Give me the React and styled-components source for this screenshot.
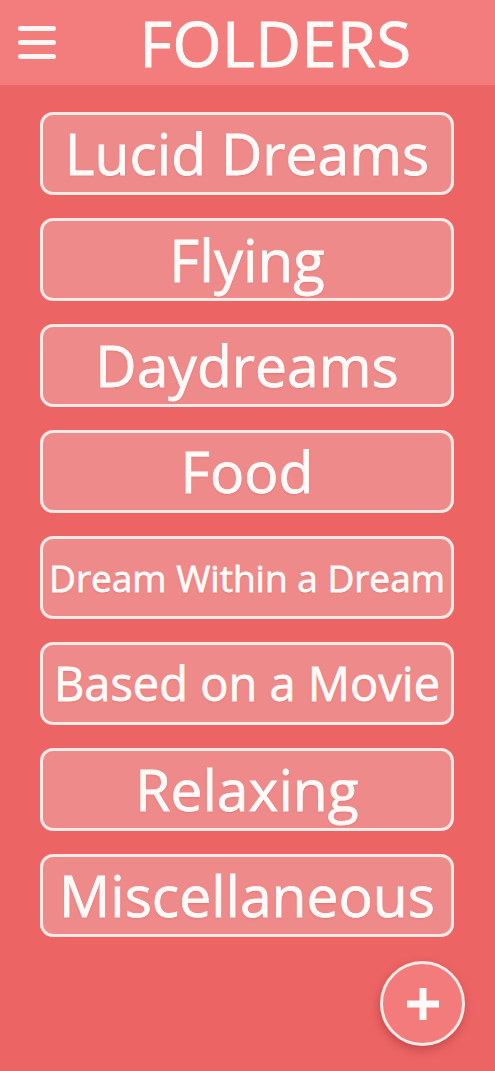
import React from 'react';
import styled, { createGlobalStyle } from 'styled-components';

const GlobalStyle = createGlobalStyle`
  html, body {
    margin: 0;
    padding: 0;
    background: #ec6464;
  }
  * { box-sizing: border-box; }
`;

const Page = styled.div`
  position: relative;
  min-height: 100vh;
  background: #ec6464;
  font-family: "Open Sans", "Noto Sans", sans-serif;
  color: #fffaf8;
`;

const Header = styled.header`
  display: flex;
  align-items: center;
  height: 85px;
  padding-left: 18px;
  background: #f37c7c;
`;

const Burger = styled.button`
  display: flex;
  flex-direction: column;
  gap: 9px;
  width: 38px;
  padding: 0;
  border: 0;
  background: none;

  span {
    display: block;
    height: 5px;
    border-radius: 3px;
    background: #fff6f3;
  }
`;

const Title = styled.h1`
  flex: 1;
  margin: 0;
  text-align: center;
  font-size: 63px;
  font-weight: 400;
  line-height: 1;
  letter-spacing: 0.5px;
  -webkit-text-stroke: 1px #fffaf8;
`;

const List = styled.div`
  display: flex;
  flex-direction: column;
  gap: 23px;
  padding: 27px 41px 0 40px;
`;

const Folder = styled.button`
  display: flex;
  align-items: center;
  justify-content: center;
  height: 83px;
  padding: 0 4px;
  border: 3px solid #fde9e6;
  border-radius: 13px;
  background: #ef8a8a;
  color: #fffaf8;
  font-family: inherit;
  font-size: ${p => p.$size}px;
  font-weight: 400;
  white-space: nowrap;
  line-height: 1;
  -webkit-text-stroke: 0.8px #fffaf8;
  text-shadow: 0 1px 2px rgba(150, 50, 50, 0.25);
`;

const Fab = styled.button`
  position: absolute;
  right: 30px;
  bottom: 25px;
  display: flex;
  align-items: center;
  justify-content: center;
  width: 85px;
  height: 85px;
  padding: 0;
  border: 3px solid #fde9e6;
  border-radius: 50%;
  background: #f37b7b;
  box-shadow: -1px 4px 8px rgba(120, 30, 30, 0.35);
`;

const folders = [
  { name: 'Lucid Dreams', size: 57 },
  { name: 'Flying', size: 58 },
  { name: 'Daydreams', size: 57 },
  { name: 'Food', size: 57 },
  { name: 'Dream Within a Dream', size: 37 },
  { name: 'Based on a Movie', size: 47 },
  { name: 'Relaxing', size: 57 },
  { name: 'Miscellaneous', size: 57 },
];

export default function App() {
  return (
    <Page>
      <GlobalStyle />
      <Header>
        <Burger aria-label="menu">
          <span />
          <span />
          <span />
        </Burger>
        <Title>FOLDERS</Title>
      </Header>
      <List>
        {folders.map(f => (
          <Folder key={f.name} $size={f.size}>{f.name}</Folder>
        ))}
      </List>
      <Fab aria-label="add folder">
        <svg width="40" height="40" viewBox="0 0 40 40">
          <path d="M20 4v32M4 20h32" stroke="#fffaf8" strokeWidth="7" />
        </svg>
      </Fab>
    </Page>
  );
}
